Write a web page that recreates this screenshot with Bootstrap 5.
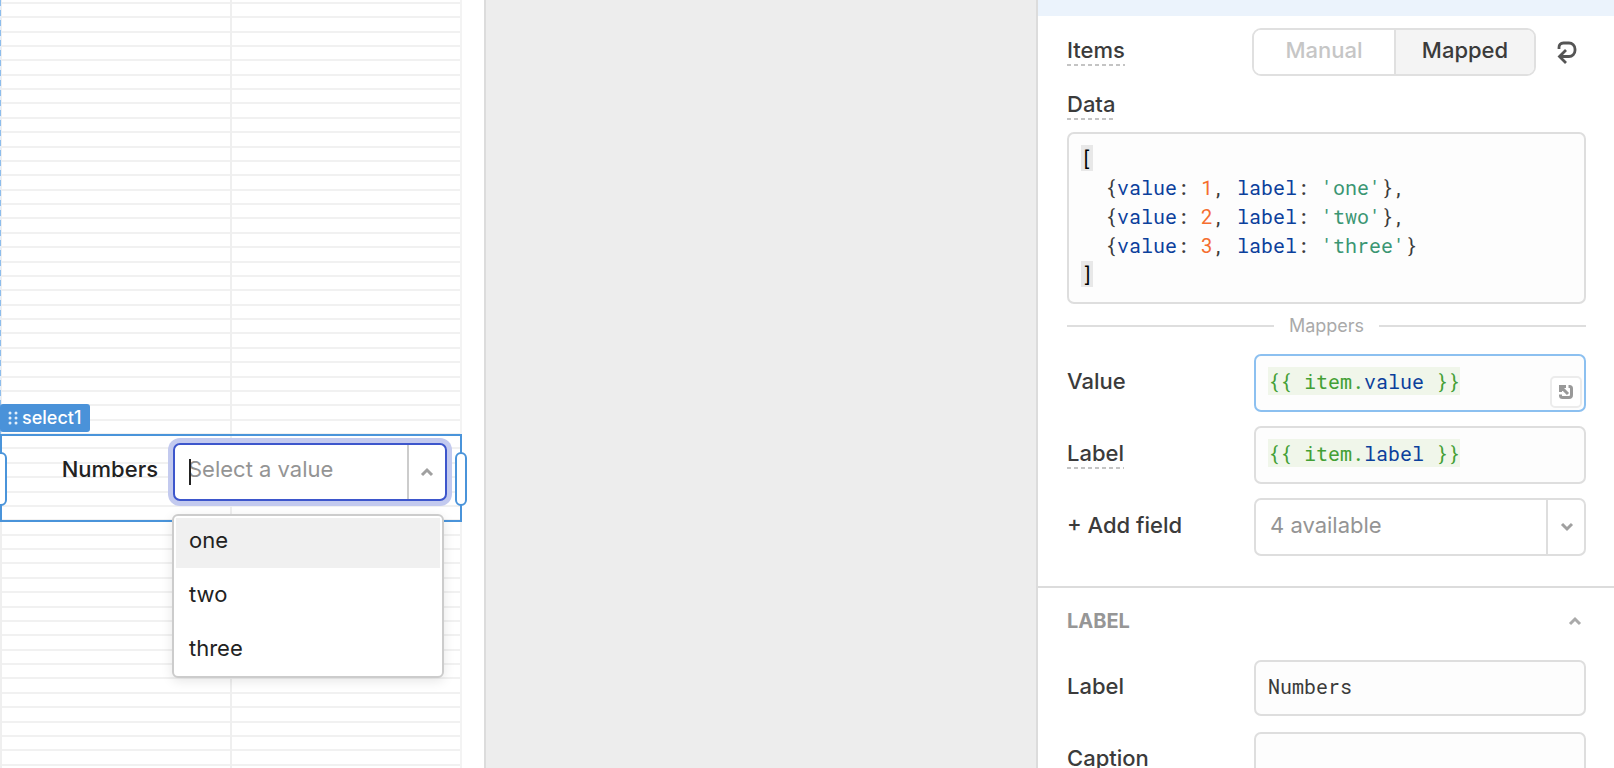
<!DOCTYPE html>
<html lang="en">
<head>
<meta charset="utf-8">
<meta name="viewport" content="width=device-width, initial-scale=1">
<title>Select component editor</title>
<link href="https://cdn.jsdelivr.net/npm/bootstrap@5.3.0/dist/css/bootstrap.min.css" rel="stylesheet">
<style>
  body { font-family: Inter, "Liberation Sans", sans-serif; font-size: 22px; line-height: 28px; color: #3b3b3b; background: #ededed; }
  button, input, select { font: inherit; color: inherit; }
  .stage { flex: 0 0 486px; padding-right: 22px; border-right: 2px solid #dcdcdc; background: #fff; }
  .stage-grid {
    --rule: #f1f1f1;
    background:
      linear-gradient(90deg, #efefef 2px, transparent 2px 230px, #efefef 230px 232px, transparent 232px calc(100% - 2px), #f3f3f3 calc(100% - 2px)),
      linear-gradient(transparent 2px, var(--rule) 2px 4px, transparent 4px 16px, var(--rule) 16px 18px, transparent 18px 31px, var(--rule) 31px 33px, transparent 33px 45px, var(--rule) 45px 47px, transparent 47px 59px, var(--rule) 59px 61px, transparent 61px 74px, var(--rule) 74px 76px, transparent 76px 88px, var(--rule) 88px 90px, transparent 90px 102px, var(--rule) 102px 104px, transparent 104px) 0 0 / 100% 115px;
  }
  .stage-grid::before { content: ""; position: absolute; left: 0; top: 0; width: 1px; height: 434px; background: repeating-linear-gradient(#8dbdec 0 6px, #e4eefa 6px 10px); }
  .widget { top: 434px; height: 88px; padding: 7px 13px 7px 0; border: 2px solid #4a94da; }
  .widget-tag { left: -2px; top: -32px; height: 28px; padding: 0 9px 0 8px; gap: 4px; border-radius: 3px; background: #4a92d9; color: #fff; font-size: 18px; font-weight: 500; line-height: 28px; }
  .grip { top: 16px; width: 12px; height: 54px; border: 2px solid #4a94da; border-radius: 6px; background: #fff; }
  .grip-l { left: -7px; }
  .grip-r { right: -7px; }
  .widget-label { color: #222; font-weight: 500; }
  .combo { width: 274px; height: 58px; margin-left: 15px; border: 2px solid #3d56cc; border-radius: 7px; background: #fff; box-shadow: 0 0 0 5px #c3caef; }
  .combo input { min-width: 0; padding: 0 0 6px 13px; border: 0; outline: 0; background: none; }
  .combo input::placeholder { color: #949494; opacity: 1; }
  .combo-toggle { flex: 0 0 38px; border: 0; border-left: 2px solid #ccc; background: none; }
  .text-caret { left: 14px; top: 14px; width: 2px; height: 26px; background: #222; }
  .options { left: -3px; top: 69px; width: 272px; padding: 2px 2px 0; gap: 4px; border: 2px solid #ccc; border-radius: 6px; background: #fff; box-shadow: 0 3px 12px #0000001a; z-index: 3; }
  .options button { height: 50px; padding: 0 13px 6px; border: 0; background: none; color: #222; text-align: left; }
  .options .picked { background: #f0f0f0; }
  .inspector { flex: 0 0 578px; border-left: 2px solid #dcdcdc; background: #fff; }
  .band { height: 16px; background: #ebf3fc; }
  .section-body { padding: 12px 28px 30px 29px; border-bottom: 2px solid #dcdcdc; }
  .field-row { display: grid; grid-template-columns: minmax(0, 1fr) 332px; align-items: center; margin-bottom: 14px; }
  .field-name { font-weight: 500; line-height: 24px; padding-bottom: 4px; }
  .hinted { background: repeating-linear-gradient(90deg, #c4c4c4 0 4px, transparent 4px 7px) 0 100% / 100% 2px no-repeat; }
  .segment { width: 284px; height: 48px; border: 2px solid #e0e0e0; border-radius: 9px; overflow: hidden; margin-left: -2px; }
  .segment button { border: 0; padding: 0 0 4px; font-weight: 500; background: #fff; color: #c6c6c6; }
  .segment .on { border-left: 2px solid #e0e0e0; background: #f4f4f4; color: #3b3b3b; }
  .reset { margin-left: 21px; }
  .mono { font-family: "Roboto Mono", "Liberation Mono", monospace; font-size: 20px; }
  .box { border: 2px solid #dedede; border-radius: 7px; background: #fdfdfd; }
  .data-name { margin-bottom: 12px; }
  .data-code { height: 172px; padding: 10px 12px; line-height: 29px; white-space: pre; overflow: hidden; outline: 0; }
  .field-box { width: 100%; height: 58px; padding: 11px 12px; line-height: 28px; outline: 0; }
  .focused { border-color: #8cc0f0; }
  .brk { background: #e8e8e8; color: #000; }
  .key { color: #0b409c; }
  .num { color: #f56e30; }
  .str { color: #3a9673; }
  .tpl { display: inline-block; background: #f0f6ea; color: #43a035; }
  .expand { right: 4px; bottom: 4px; width: 32px; height: 32px; border: 2px solid #ececec; border-radius: 5px; background: #fff; }
  .mappers { margin: 8px 0 14px; gap: 15px; font-size: 18px; color: #aaa; }
  .mappers::before, .mappers::after { content: ""; flex: 1; height: 2px; background: #dedede; }
  .picker { width: 100%; height: 58px; padding: 0 54px 4px 14px; appearance: none; color: #949494; background: #fff; }
  .picker-arrow { right: 0; top: 0; width: 40px; height: 58px; border-left: 2px solid #dedede; pointer-events: none; }
  .label-section { padding: 19px 28px 0 29px; }
  .label-section .field-row { margin-bottom: 16px; }
  .label-section .field-box { height: 56px; padding: 10px 12px 14px; }
  .section-head { margin-bottom: 25px; padding: 0 4px 0 0; border: 0; background: none; color: #969696; font-size: 20px; font-weight: 700; }
  svg { display: block; fill: none; }
</style>
</head>
<body>
<div class="d-flex vh-100 overflow-hidden">
  <main class="stage">
    <div class="stage-grid position-relative h-100">
      <div class="widget position-absolute w-100 d-flex justify-content-end align-items-start">
        <div class="widget-tag position-absolute d-flex align-items-center">
          <svg width="10" height="14" viewBox="0 0 10 14"><path d="M2 2h.01M8 2h.01M2 7h.01M8 7h.01M2 12h.01M8 12h.01" stroke="#e3effb" stroke-width="3" stroke-linecap="round"/></svg>
          <span>select1</span>
        </div>
        <span class="grip grip-l position-absolute"></span>
        <span class="grip grip-r position-absolute"></span>
        <label class="widget-label pt-2 mt-1" for="numbers">Numbers</label>
        <div class="combo position-relative d-flex">
          <input class="flex-grow-1" id="numbers" type="text" placeholder="Select a value" autocomplete="off">
          <span class="text-caret position-absolute"></span>
          <button class="combo-toggle d-flex align-items-center justify-content-center p-0" type="button" aria-label="Close options">
            <svg width="14" height="10" viewBox="0 0 14 10"><path d="M2 8l5-5 5 5" stroke="#a0a0a0" stroke-width="3"/></svg>
          </button>
          <div class="options position-absolute d-flex flex-column">
            <button class="picked" type="button">one</button>
            <button type="button">two</button>
            <button type="button">three</button>
          </div>
        </div>
      </div>
    </div>
  </main>
  <div class="flex-grow-1"></div>
  <aside class="inspector">
    <div class="band"></div>
    <section class="section-body">
      <div class="field-row mb-3">
        <div class="d-flex"><span class="field-name hinted">Items</span></div>
        <div class="d-flex align-items-center">
          <div class="segment d-flex">
            <button class="w-50" type="button">Manual</button>
            <button class="w-50 on" type="button">Mapped</button>
          </div>
          <button class="reset btn p-0 border-0" type="button" aria-label="Reset">
            <svg width="20" height="24" viewBox="0 0 20 24"><path d="M2 9V7.500Q2 3 6.500 3H12a6 6 0 0 1 6 6v1.500a6 6 0 0 1-6 6H3M9 10l-6.500 6.500L9 23" stroke="#555" stroke-width="2.800"/></svg>
          </button>
        </div>
      </div>
      <div class="data-name d-flex"><span class="field-name hinted" id="data-name">Data</span></div>
      <div class="data-code box mono" contenteditable="true" role="textbox" aria-multiline="true" aria-labelledby="data-name" spellcheck="false"><div><span class="brk">[</span></div><div>  {<span class="key">value</span>: <span class="num">1</span>, <span class="key">label</span>: <span class="str">'one'</span>},</div><div>  {<span class="key">value</span>: <span class="num">2</span>, <span class="key">label</span>: <span class="str">'two'</span>},</div><div>  {<span class="key">value</span>: <span class="num">3</span>, <span class="key">label</span>: <span class="str">'three'</span>}</div><div><span class="brk">]</span></div></div>
      <div class="mappers d-flex align-items-center">Mappers</div>
      <div class="field-row">
        <span class="field-name" id="value-name">Value</span>
        <div class="position-relative">
          <div class="field-box box focused mono" contenteditable="true" role="textbox" aria-labelledby="value-name" spellcheck="false"><span class="tpl">{{ item.<span class="key">value</span> }}</span></div>
          <button class="expand position-absolute d-flex align-items-center justify-content-center p-0" type="button" aria-label="Expand editor">
            <svg width="16" height="16" viewBox="0 0 16 16"><path d="M2.500 8V2.500H8M2.500 2.500L10 10M10.500 2.500h1q2 0 2 2V11q0 2.500-2.500 2.500H4.500q-2 0-2-2v-1" stroke="#999" stroke-width="3"/></svg>
          </button>
        </div>
      </div>
      <div class="field-row">
        <div class="d-flex"><span class="field-name hinted" id="label-name">Label</span></div>
        <div class="field-box box mono" contenteditable="true" role="textbox" aria-labelledby="label-name" spellcheck="false"><span class="tpl">{{ item.<span class="key">label</span> }}</span></div>
      </div>
      <div class="field-row mb-0">
        <label class="field-name" for="add-field">+ Add field</label>
        <div class="position-relative">
          <select class="picker box d-block" id="add-field"><option>4 available</option></select>
          <span class="picker-arrow position-absolute d-flex align-items-center justify-content-center">
            <svg width="14" height="10" viewBox="0 0 14 10"><path d="M2 2l5 5 5-5" stroke="#a0a0a0" stroke-width="3"/></svg>
          </span>
        </div>
      </div>
    </section>
    <section class="label-section">
      <button class="section-head w-100 d-flex align-items-center justify-content-between" type="button">LABEL
        <svg width="14" height="10" viewBox="0 0 14 10"><path d="M2 8l5-5 5 5" stroke="#aaa" stroke-width="3"/></svg>
      </button>
      <div class="field-row">
        <label class="field-name" for="label-text">Label</label>
        <input class="field-box box mono" id="label-text" type="text" value="Numbers">
      </div>
      <div class="field-row">
        <label class="field-name" for="caption-text">Caption</label>
        <input class="field-box box mono" id="caption-text" type="text">
      </div>
    </section>
  </aside>
</div>
<script src="https://cdn.jsdelivr.net/npm/bootstrap@5.3.0/dist/js/bootstrap.bundle.min.js"></script>
</body>
</html>
